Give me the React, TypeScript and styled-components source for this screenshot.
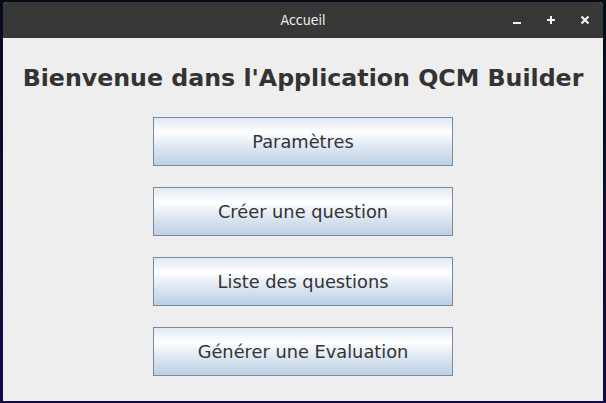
import React from "react";
import styled, { createGlobalStyle } from "styled-components";

const GlobalStyle = createGlobalStyle`
  html, body {
    margin: 0;
    padding: 0;
  }
  body {
    width: 606px;
    height: 403px;
    overflow: hidden;
    background: linear-gradient(180deg, #060b18 0%, #0b0d2e 45%, #120a45 100%);
    font-family: "DejaVu Sans", sans-serif;
  }
`;

const Desktop = styled.div`
  width: 606px;
  height: 403px;
  padding: 2px 3px 2px 3px;
  box-sizing: border-box;
`;

const Window = styled.div`
  width: 600px;
  height: 399px;
  display: flex;
  flex-direction: column;
  border-radius: 4px 4px 0 0;
  overflow: hidden;
  background: #eeeeee;
`;

const TitleBar = styled.header`
  height: 36px;
  flex-shrink: 0;
  background: #373737;
  display: flex;
  align-items: center;
  justify-content: center;
  position: relative;
`;

const Title = styled.span`
  color: #f2f2f2;
  font-family: "DejaVu Sans Condensed", "DejaVu Sans", sans-serif;
  font-stretch: condensed;
  font-size: 14px;
`;

const Controls = styled.div`
  position: absolute;
  right: 10px;
  top: 0;
  height: 36px;
  display: flex;
  align-items: center;
  gap: 18px;
`;

const Control = styled.span`
  width: 16px;
  height: 16px;
  display: flex;
  align-items: center;
  justify-content: center;
`;

const Content = styled.main`
  flex: 1;
  display: flex;
  flex-direction: column;
  align-items: center;
  padding-top: 23px;
`;

const Heading = styled.h1`
  margin: 0 0 21px 0;
  font-family: "DejaVu Sans", sans-serif;
  font-weight: bold;
  font-size: 23.7px;
  line-height: 35px;
  color: #333333;
  white-space: nowrap;
`;

const ButtonList = styled.div`
  display: flex;
  flex-direction: column;
  gap: 21px;
`;

const MenuButton = styled.button`
  width: 300px;
  height: 49px;
  box-sizing: border-box;
  border: 1px solid #7a8a99;
  border-radius: 0;
  padding: 0;
  background: linear-gradient(180deg, #dfe8f3 0%, #ffffff 30%, #dde7f2 62%, #bcd0e4 100%);
  font-family: "DejaVu Sans", sans-serif;
  font-size: 17.8px;
  color: #333333;
  cursor: pointer;
`;

const labels = [
  "Paramètres",
  "Créer une question",
  "Liste des questions",
  "Générer une Evaluation",
];

export default function App() {
  return (
    <>
      <GlobalStyle />
      <Desktop>
        <Window>
          <TitleBar>
            <Title>Accueil</Title>
            <Controls>
              <Control>
                <svg width="12" height="12" viewBox="0 0 12 12">
                  <rect x="2" y="8" width="8" height="2" fill="#f2f2f2" />
                </svg>
              </Control>
              <Control>
                <svg width="12" height="12" viewBox="0 0 12 12">
                  <rect x="2" y="5" width="8" height="2" fill="#f2f2f2" />
                  <rect x="5" y="2" width="2" height="8" fill="#f2f2f2" />
                </svg>
              </Control>
              <Control>
                <svg width="12" height="12" viewBox="0 0 12 12">
                  <path d="M2.5 2.5 L9.5 9.5 M9.5 2.5 L2.5 9.5" stroke="#f2f2f2" strokeWidth="2.2" />
                </svg>
              </Control>
            </Controls>
          </TitleBar>
          <Content>
            <Heading>Bienvenue dans l'Application QCM Builder</Heading>
            <ButtonList>
              {labels.map((l) => (
                <MenuButton key={l}>{l}</MenuButton>
              ))}
            </ButtonList>
          </Content>
        </Window>
      </Desktop>
    </>
  );
}
